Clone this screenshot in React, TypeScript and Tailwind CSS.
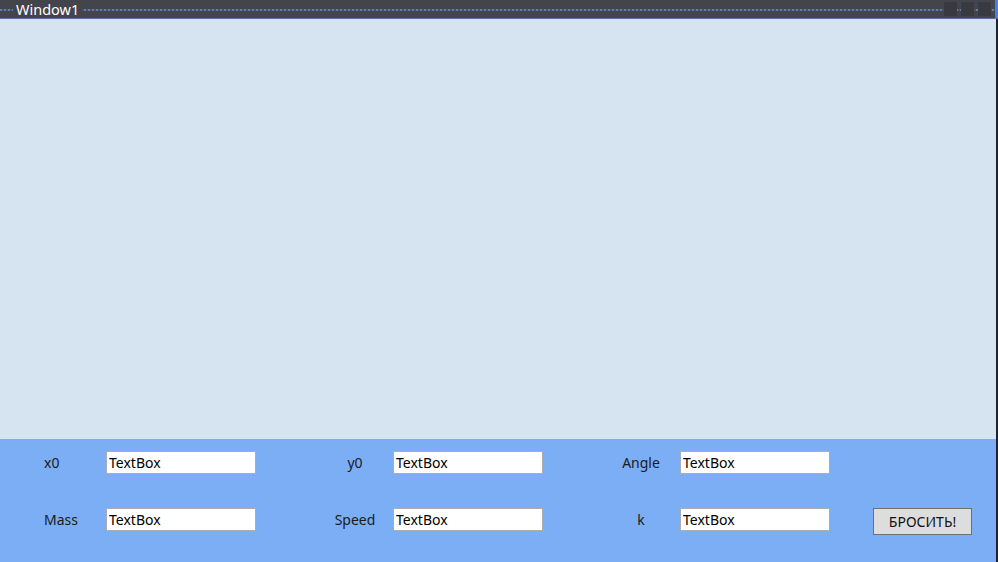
import React from "react";

const font = { fontFamily: '"Noto Sans", "Open Sans", sans-serif' };

function Field({ label, center }: { label: string; center?: boolean }) {
  return (
    <>
      <div className={`h-[23px] flex items-center text-[14px] text-[#1b1b1b] ${center ? "justify-center" : "justify-start"}`}>
        {label}
      </div>
      <input
        readOnly
        defaultValue="TextBox"
        className="h-[23px] w-[150px] border border-[#abadb3] bg-white px-[2px] text-[14px] text-black outline-none"
        style={font}
      />
    </>
  );
}

export default function App() {
  return (
    <div className="w-[998px] h-[562px] flex flex-col overflow-hidden bg-[#d6e4f2]" style={font}>
      {/* title bar */}
      <div className="h-[19px] shrink-0 flex bg-[#44444c] border-b border-[#5d6f9c]">
        <div className="relative flex-1 flex items-center">
          <div className="absolute left-0 right-0 top-[9px] h-[2px] bg-[repeating-linear-gradient(90deg,#5f7cc0_0px,#5f7cc0_2px,#50505a_2px,#50505a_4px)]" />
          <span className="relative ml-[13px] px-[3px] bg-[#44444c] text-[14.5px] leading-[18px] text-white">Window1</span>
          <div className="relative ml-auto mr-[4px] flex gap-[4px]">
            <div className="w-[13px] h-[14px] bg-[#393940]" />
            <div className="w-[13px] h-[14px] bg-[#393940]" />
            <div className="w-[13px] h-[14px] bg-[#393940]" />
          </div>
        </div>
        <div className="w-[3px] bg-[#4f7fd8]" />
      </div>

      <div className="flex-1 flex">
        <div className="flex-1 flex flex-col">
          {/* canvas area */}
          <div className="flex-1 bg-[#d6e4f2]" />

          {/* controls */}
          <div className="h-[123px] shrink-0 bg-[#7baef5] pt-[12px]">
            <div className="grid grid-cols-[62px_150px_61px_76px_150px_59px_78px_150px_43px_99px] gap-y-[34px] items-start pl-[44px]">
              <Field label="x0" />
              <div />
              <Field label="y0" center />
              <div />
              <Field label="Angle" center />
              <div />
              <div />

              <Field label="Mass" />
              <div />
              <Field label="Speed" center />
              <div />
              <Field label="k" center />
              <div />
              <button className="h-[27px] w-[99px] border border-[#707070] bg-[#dddddd] text-[14px] text-[#111]">
                БРОСИТЬ!
              </button>
            </div>
          </div>
        </div>
        <div className="w-[2px] bg-[#1f2230]" />
      </div>
    </div>
  );
}
